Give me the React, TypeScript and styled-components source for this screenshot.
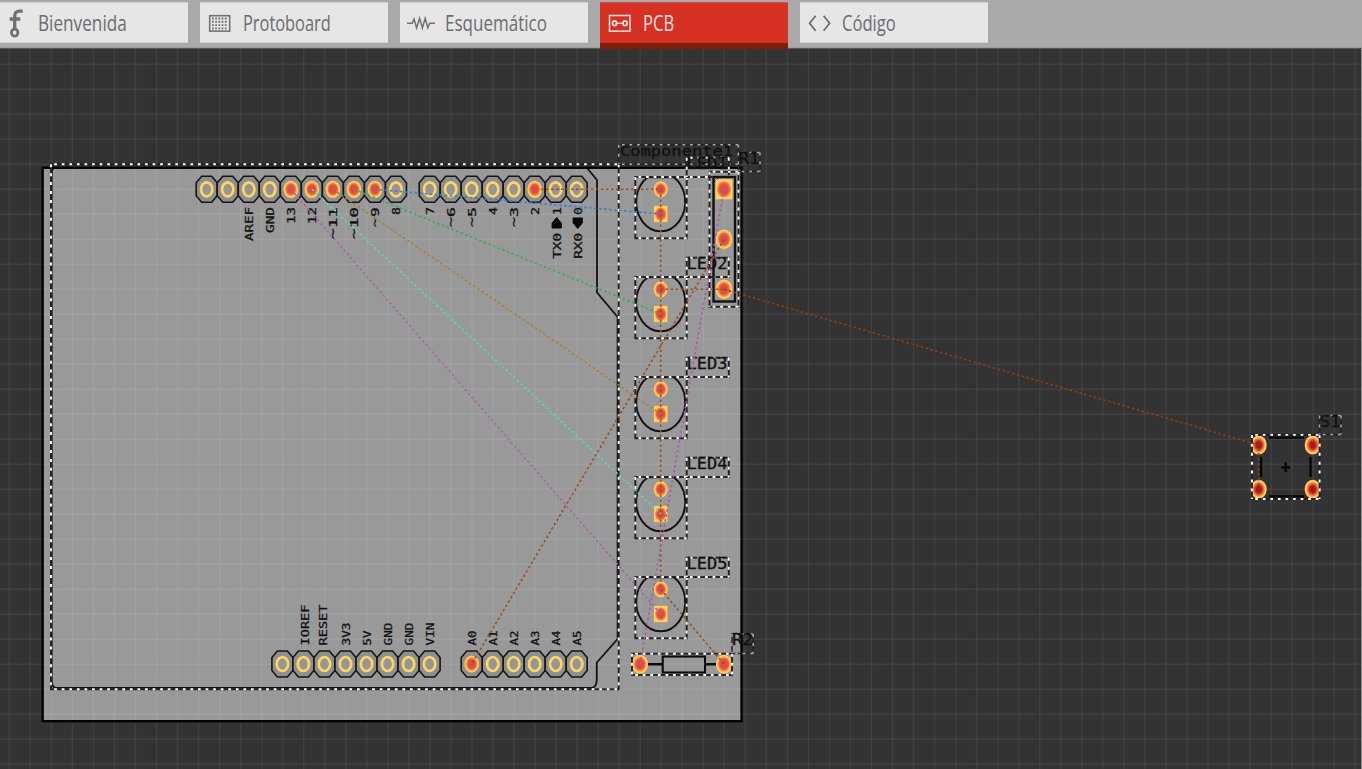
import React from "react";
import styled, { createGlobalStyle } from "styled-components";

const GlobalStyle = createGlobalStyle`
  html, body { margin: 0; padding: 0; overflow: hidden; background: #333; }
`;

const Window = styled.div`
  width: 1362px;
  height: 769px;
  display: flex;
  flex-direction: column;
  overflow: hidden;
`;

const TabBar = styled.nav`
  height: 49px;
  flex: none;
  box-sizing: border-box;
  display: flex;
  align-items: flex-start;
  gap: 12px;
  padding-top: 2px;
  background: linear-gradient(#a9a9a9 47px, #9b9d9d 47px, #9b9d9d 48px, #585858 48px);
`;

const Tab = styled.div<{ $active?: boolean }>`
  width: 188px;
  height: ${(p) => (p.$active ? 47 : 41)}px;
  flex: none;
  box-sizing: border-box;
  display: flex;
  align-items: flex-start;
  background: ${(p) => (p.$active ? "#d63122" : "#e6e6e6")};
  color: ${(p) => (p.$active ? "#fbe3e0" : "#6a6d70")};
  border: 1px solid ${(p) => (p.$active ? "#c2574d" : "#cfcfcf")};
  border-width: 1px 0 ${(p) => (p.$active ? "6px" : "1px")};
  border-bottom-color: ${(p) => (p.$active ? "#7e1e0a" : "#cfcfcf")};
`;

const IconSlot = styled.span<{ $width: number }>`
  width: ${(p) => p.$width}px;
  height: 39px;
  flex: none;
  svg { display: block; }
`;

const TabLabel = styled.span<{ $scale: number }>`
  font: 400 21px/41px "Open Sans", "Noto Sans", sans-serif;
  white-space: nowrap;
  transform: scaleX(${(p) => p.$scale});
  transform-origin: left center;
`;

const Canvas = styled.main`
  flex: 1;
  min-height: 0;
  background: #333;
  border-right: 1px solid #8f8f8f;
  svg { display: block; }
`;

const SilkText = styled.text<{ $size?: number }>`
  font-family: "DejaVu Sans Mono", monospace;
  font-size: ${(p) => p.$size ?? 10.8}px;
  fill: #111;
  stroke: #111;
  stroke-width: 0.3px;
`;

const FritzingIcon = () => (
  <svg width="38" height="39" viewBox="0 3 38 39" fill="none" stroke="#707070" strokeWidth="3.3">
    <path d="M22.7 11.2h-3q-5 0-5 5v13M9.7 19h10.6" />
    <ellipse cx="14.7" cy="32.6" rx="3.2" ry="3.6" strokeWidth="2.8" />
  </svg>
);

const BreadboardIcon = () => (
  <svg width="39" height="39" viewBox="0 3 39 39" fill="none" stroke="#727272">
    <rect x="9.7" y="15.7" width="20" height="15.4" strokeWidth="1.6" />
    {[18.5, 21.8, 25.1, 28.4].map((y) => (
      <path key={y} d={`M12 ${y}h16`} strokeWidth="1.9" strokeDasharray="1.8 1.4" />
    ))}
  </svg>
);

const ResistorIcon = () => (
  <svg width="39" height="39" viewBox="0 3 39 39" fill="none" stroke="#727272" strokeWidth="1.5">
    <path d="M7 23.3h5.2l1.8-4.3 2.6 9 3-9.7 2.8 9.7 2.8-9.7 2.6 9.5 1.9-4.5H35" />
  </svg>
);

const PcbIcon = () => (
  <svg width="39" height="39" viewBox="0 3 39 39" fill="none" stroke="#fbe3e0">
    <rect x="9.5" y="15.5" width="20.5" height="15.7" strokeWidth="1.5" />
    <ellipse cx="14.5" cy="23.3" rx="2" ry="2.4" strokeWidth="1.8" />
    <ellipse cx="25" cy="23.3" rx="2" ry="2.4" strokeWidth="1.8" />
    <path d="M16.5 23.3h6.5" strokeWidth="1.4" />
  </svg>
);

const CodeIcon = () => (
  <svg width="39" height="39" viewBox="0 3 39 39" fill="none" stroke="#6a6a6a" strokeWidth="1.7">
    <path d="M15.6 15.8l-6 7.5 6 7.5M23.6 15.8l6 7.5-6 7.5" />
  </svg>
);

const tabs = [
  { label: "Bienvenida", icon: <FritzingIcon />, slot: 38.4, scale: 0.818 },
  { label: "Protoboard", icon: <BreadboardIcon />, slot: 42.6, scale: 0.78 },
  { label: "Esquemático", icon: <ResistorIcon />, slot: 45, scale: 0.81 },
  { label: "PCB", icon: <PcbIcon />, slot: 42.6, scale: 0.79, active: true },
  { label: "Código", icon: <CodeIcon />, slot: 41.5, scale: 0.79 },
];

const range = (n: number) => Array.from({ length: n }, (_, i) => i);

const Grid = () => (
  <g stroke="#74889c" strokeOpacity="0.17" strokeWidth="1.4">
    {range(65).map((i) => (
      <path key={i} d={`M${9.3 + i * 21.03} 49V769`} />
    ))}
    {range(29).map((i) => (
      <path key={i} d={`M0 ${64.3 + i * 25}H1361`} />
    ))}
  </g>
);

const BoardGrid = () => (
  <g stroke="#b0bac2" strokeOpacity="0.24" strokeWidth="1.4">
    {range(33).map((i) => (
      <path key={i} d={`M${51.4 + i * 21.03} 169V720`} />
    ))}
    {range(22).map((i) => (
      <path key={i} d={`M44 ${189.3 + i * 25}H741`} />
    ))}
  </g>
);

type Box = { x1: number; y1: number; x2: number; y2: number };

/* Selection marquee: white dots marching over a dark outline. */
const Marquee = ({ x1, y1, x2, y2, dim }: Box & { dim?: boolean }) => (
  <g fill="none" strokeWidth={dim ? 1.5 : 1.9}>
    <rect x={x1} y={y1} width={x2 - x1} height={y2 - y1} stroke="#222" />
    <g stroke={dim ? "#aaa" : "#fff"}>
      <path d={`M${x1} ${y1}H${x2}M${x1} ${y2}H${x2}`} strokeDasharray="2.7 4.87" strokeDashoffset="-3.2" />
      <path d={`M${x1} ${y1}V${y2}M${x2} ${y1}V${y2}`} strokeDasharray="3 5.93" strokeDashoffset="0" />
    </g>
  </g>
);

const HeaderPin = ({ x, y, live }: { x: number; y: number; live?: boolean }) => (
  <g>
    <path
      d={`M${x - 5} ${y - 13}h10l5.5 6.5v13l-5.5 6.5h-10l-5.5-6.5v-13z`}
      fill="#8f8f8f"
      stroke="#161616"
      strokeWidth="1.6"
    />
    {live ? (
      <ellipse cx={x} cy={y} rx="7.3" ry="8.6" fill="url(#pad)" />
    ) : (
      <ellipse cx={x} cy={y} rx="5.7" ry="7" fill="#969696" stroke="#ffd65f" strokeWidth="2.7" />
    )}
  </g>
);

const RoundPad = ({ x, y, rx = 7, ry = 8, dark }: { x: number; y: number; rx?: number; ry?: number; dark?: boolean }) => (
  <ellipse cx={x} cy={y} rx={rx} ry={ry} fill={dark ? "url(#padDark)" : "url(#pad)"} />
);

const SquarePad = ({ x, y, w = 13.6, h = 16.2 }: { x: number; y: number; w?: number; h?: number }) => (
  <g>
    <rect x={x - w / 2} y={y - h / 2} width={w} height={h} fill="#ffd05a" />
    <ellipse cx={x} cy={y} rx={w * 0.42} ry={h * 0.42} fill="url(#padCore)" />
  </g>
);

const Designator = ({ text, x, y, length, size = 15 }: { text: string; x: number; y: number; length: number; size?: number }) => (
  <SilkText $size={size} x={x} y={y} textLength={length} lengthAdjust="spacingAndGlyphs">
    {text}
  </SilkText>
);

const Led = ({ index }: { index: number }) => {
  const y = 189.3 + index * 100;
  return (
    <g>
      <path
        d={`M${660.7 - 13} ${y - 12}H${660.7 + 13}A24.5 29.2 0 1 1 ${660.7 - 13} ${y - 12}Z`}
        fill="none"
        stroke="#111"
        strokeWidth="1.9"
      />
      <RoundPad x={660.7} y={y} />
      <SquarePad x={660.7} y={y + 24.7} />
      <Marquee x1={635.3} y1={y - 12.3} x2={686.7} y2={y + 49} />
      <Marquee x1={686.7} y1={y - 31.6} x2={728.8} y2={y - 12.3} />
      <Designator text={`LED${index + 1}`} x={686.4} y={y - 20.2} length={41} />
    </g>
  );
};

const topLabels: [string, number, number][] = [
  ["AREF", 248.7, 34], ["GND", 270.3, 26], ["13", 291, 17], ["12", 312, 17],
  ["~11", 333, 32], ["~10", 354, 32], ["~9", 375, 20], ["8", 396, 8],
  ["7", 429.7, 8], ["~6", 450.7, 20], ["~5", 471.7, 20], ["4", 492.7, 8],
  ["~3", 513.7, 20], ["2", 534.7, 8], ["1", 556.7, 8], ["0", 577.7, 8],
];

const bottomLabels: [string, number, number][] = [
  ["IOREF", 304.9, 41], ["RESET", 323, 41], ["3V3", 346, 23], ["5V", 366.9, 15],
  ["GND", 387.9, 23], ["GND", 408.5, 23], ["VIN", 429.8, 23],
  ["A0", 471.7, 15], ["A1", 492.7, 15], ["A2", 513.7, 15],
  ["A3", 534.7, 15], ["A4", 555.7, 15], ["A5", 576.7, 15],
];

const SerialLabel = ({ text, x, up }: { text: string; x: number; up?: boolean }) => (
  <g>
    <path
      d={up ? `M${x} 217.5l4.6 5.5v5h-9.2v-5z` : `M${x} 228.5l4.6-5.5v-5h-9.2v5z`}
      fill="#080808"
      stroke="#080808"
      strokeLinejoin="round"
    />
    <SilkText transform={`translate(${x + 4} 258.8) rotate(-90)`} textLength={26} lengthAdjust="spacingAndGlyphs">
      {text}
    </SilkText>
  </g>
);

const Arduino = () => (
  <g>
    <path
      d="M53 168.5Q51.7 170 51.7 174V680Q51.7 687.8 56 687.8H592Q596.8 687 596.8 679V662.5L617.6 639V317L597 292.5V180L587 168"
      fill="none"
      stroke="#111"
      strokeWidth="1.8"
    />
    {range(10).map((i) => (
      <HeaderPin key={i} x={206.7 + i * 21.03} y={189.3} live={i >= 4 && i <= 8} />
    ))}
    {range(8).map((i) => (
      <HeaderPin key={i} x={429.7 + i * 21} y={189.3} live={i === 5} />
    ))}
    {range(8).map((i) => (
      <HeaderPin key={i} x={282.4 + i * 21.03} y={664} />
    ))}
    {range(6).map((i) => (
      <HeaderPin key={i} x={471.7 + i * 21} y={664} live={i === 0} />
    ))}
    {topLabels.map(([t, x, len]) => (
      <SilkText
        key={t + x}
        transform={`translate(${x + 4} ${207 + len}) rotate(-90)`}
        textLength={len}
        lengthAdjust="spacingAndGlyphs"
      >
        {t}
      </SilkText>
    ))}
    {bottomLabels.map(([t, x, len]) => (
      <SilkText
        key={t + x}
        transform={`translate(${x + 4} 645.5) rotate(-90)`}
        textLength={len}
        lengthAdjust="spacingAndGlyphs"
      >
        {t}
      </SilkText>
    ))}
    <SerialLabel text="TX0" x={556.7} up />
    <SerialLabel text="RX0" x={577.7} />
    <Marquee x1={51} y1={164.2} x2={618.7} y2={689.3} />
    <Marquee x1={618.7} y1={144.8} x2={738.3} y2={164.2} dim />
    <Designator text="Componente1" x={620} y={156} length={113} size={14.4} />
  </g>
);

const Trimmer = () => (
  <g>
    <rect x="713.5" y="177" width="21.5" height="124.5" fill="none" stroke="#111" strokeWidth="2.4" />
    <path d="M714 182l5-5" stroke="#111" />
    <SquarePad x={724} y={189.3} w={17} h={20} />
    <RoundPad x={724} y={239.3} rx={8.3} ry={9.8} />
    <RoundPad x={724} y={289.3} rx={8.3} ry={9.8} />
    <Marquee x1={709.5} y1={171.8} x2={738.5} y2={306.8} />
    <Marquee x1={738.5} y1={152.4} x2={760} y2={171.4} dim />
    <Designator text="R1" x={738.5} y={164} length={21} />
  </g>
);

const Resistor = () => (
  <g>
    <path d="M645 664.3h17M705 664.3h15" stroke="#0a0a0a" strokeWidth="2.4" />
    <rect x="662.7" y="656.5" width="42.3" height="16" fill="none" stroke="#0a0a0a" strokeWidth="2.1" />
    <RoundPad x={640} y={664.2} rx={8} ry={9.5} />
    <RoundPad x={724} y={664.2} rx={8} ry={9.5} />
    <Marquee x1={632} y1={653.7} x2={732} y2={675} />
    <Marquee x1={732} y1={634} x2={753.2} y2={653.5} dim />
    <Designator text="R2" x={732} y={645} length={21} />
  </g>
);

const PushButton = () => (
  <g>
    <path
      d="M1269 437.7h35M1269 496.3h35M1261 457v20M1310.5 457v20M1281.3 467.3h8.8M1285.7 462.3v10"
      stroke="#050505"
      strokeWidth="2.3"
    />
    <RoundPad x={1258.7} y={445} rx={8} ry={9.5} dark />
    <RoundPad x={1312.7} y={445} rx={8} ry={9.5} dark />
    <RoundPad x={1258.7} y={489.3} rx={8} ry={9.5} dark />
    <RoundPad x={1312.7} y={489.3} rx={8} ry={9.5} dark />
    <Marquee x1={1252} y1={434.9} x2={1319.6} y2={499} />
    <Marquee x1={1319.6} y1={415.5} x2={1341} y2={434.5} dim />
    <Designator text="S1" x={1319.5} y={427} length={21} />
  </g>
);

const airwires: [string, string][] = [
  ["#99501f", "M541 189.3H660.7V589.3L724 664"],
  ["#99501f", "M660.7 289.3H724"],
  ["#99501f", "M724 239.3L471.7 664"],
  ["#8a4210", "M724 289.3L1258.7 445V489.3"],
  ["#2f80d8", "M375 189.3L660.7 214"],
  ["#35ad5c", "M354 189.3L660.7 314"],
  ["#a8822d", "M333 189.3L660.7 414"],
  ["#50ddb0", "M312 189.3L660.7 514"],
  ["#a766a4", "M291 189.3L660.7 614"],
  ["#ab5aa5", "M724 189.3L640 664"],
];

const BoardView = () => (
  <svg width="1361" height="720" viewBox="0 49 1361 720">
    <defs>
      <radialGradient id="pad">
        <stop offset="0.4" stopColor="#d64d4b" />
        <stop offset="0.6" stopColor="#f3633b" />
        <stop offset="0.75" stopColor="#ffac44" />
        <stop offset="0.92" stopColor="#ffd55c" />
      </radialGradient>
      <radialGradient id="padDark">
        <stop offset="0.3" stopColor="#a31b1c" />
        <stop offset="0.48" stopColor="#d9382d" />
        <stop offset="0.66" stopColor="#f3803d" />
        <stop offset="0.85" stopColor="#ffd05a" />
      </radialGradient>
      <radialGradient id="padCore">
        <stop offset="0.5" stopColor="#d64d4b" />
        <stop offset="0.78" stopColor="#f5683a" />
        <stop offset="1" stopColor="#ffae46" />
      </radialGradient>
    </defs>
    <Grid />
    <rect x="42.7" y="167.8" width="698.8" height="553.4" fill="#999" stroke="#000" strokeWidth="2.3" />
    <BoardGrid />
    <Arduino />
    {range(5).map((i) => (
      <Led key={i} index={i} />
    ))}
    <Trimmer />
    <Resistor />
    <PushButton />
    <g fill="none" strokeWidth="1.6" strokeDasharray="2.5 2.5">
      {airwires.map(([color, d]) => (
        <path key={d} d={d} stroke={color} />
      ))}
    </g>
  </svg>
);

export default function App() {
  return (
    <Window>
      <GlobalStyle />
      <TabBar>
        {tabs.map((t) => (
          <Tab key={t.label} $active={t.active}>
            <IconSlot $width={t.slot}>{t.icon}</IconSlot>
            <TabLabel $scale={t.scale}>{t.label}</TabLabel>
          </Tab>
        ))}
      </TabBar>
      <Canvas>
        <BoardView />
      </Canvas>
    </Window>
  );
}
